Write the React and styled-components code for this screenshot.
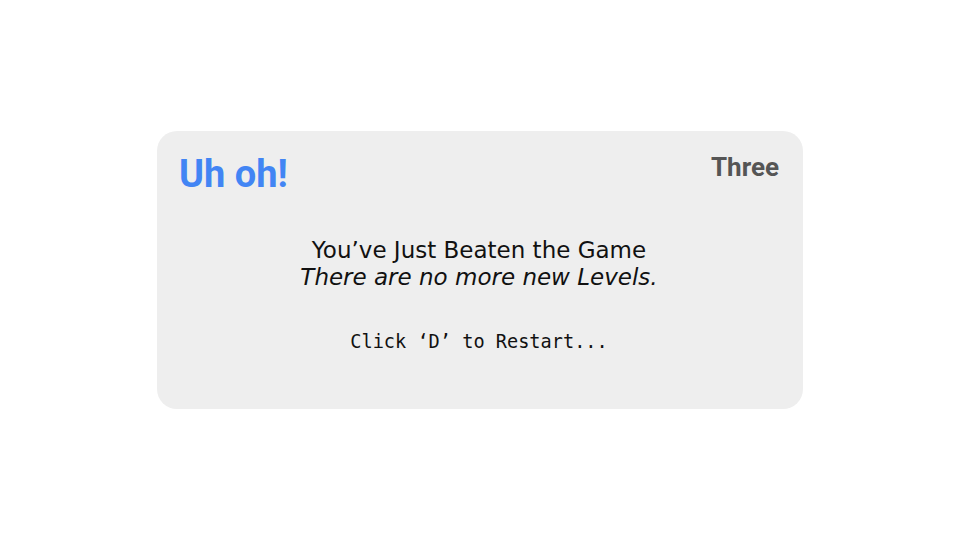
import React from "react";
import styled, { createGlobalStyle } from "styled-components";

const Global = createGlobalStyle`
  html, body { margin: 0; padding: 0; background: #ffffff; }
  body { width: 960px; height: 540px; overflow: hidden; }
  #root { width: 960px; height: 540px; }
`;

const Page = styled.div`
  width: 960px;
  height: 540px;
  display: flex;
  align-items: flex-start;
  justify-content: center;
  padding-top: 131px;
  box-sizing: border-box;
`;

const Card = styled.div`
  width: 646px;
  height: 278px;
  background: #eeeeee;
  border-radius: 20px;
  box-sizing: border-box;
  padding: 21px 24px 0 22px;
  display: flex;
  flex-direction: column;
`;

const Header = styled.div`
  display: flex;
  justify-content: space-between;
  align-items: flex-start;
`;

const Title = styled.h1`
  margin: 0;
  font-family: Roboto, "Liberation Sans", sans-serif;
  font-weight: 700;
  font-size: 38px;
  line-height: 44px;
  color: #4285f4;
`;

const Level = styled.div`
  font-family: Roboto, "Liberation Sans", sans-serif;
  font-weight: 700;
  font-size: 26px;
  line-height: 30px;
  color: #555555;
`;

const Message = styled.div`
  margin-top: 41px;
  text-align: center;
  font-family: "DejaVu Sans", "Open Sans", sans-serif;
  font-size: 23px;
  line-height: 27px;
  color: #111111;
`;

const Line = styled.div`
  font-style: ${(p) => (p.$italic ? "italic" : "normal")};
`;

const Prompt = styled.div`
  margin-top: 39px;
  text-align: center;
  font-family: "DejaVu Sans Mono", "Liberation Mono", monospace;
  font-size: 18.6px;
  line-height: 24px;
  color: #111111;
`;

export default function App() {
  return (
    <>
      <Global />
      <Page>
        <Card>
          <Header>
            <Title>Uh oh!</Title>
            <Level>Three</Level>
          </Header>
          <Message>
            <Line>You’ve Just Beaten the Game</Line>
            <Line $italic>There are no more new Levels.</Line>
          </Message>
          <Prompt>Click ‘D’ to Restart...</Prompt>
        </Card>
      </Page>
    </>
  );
}
